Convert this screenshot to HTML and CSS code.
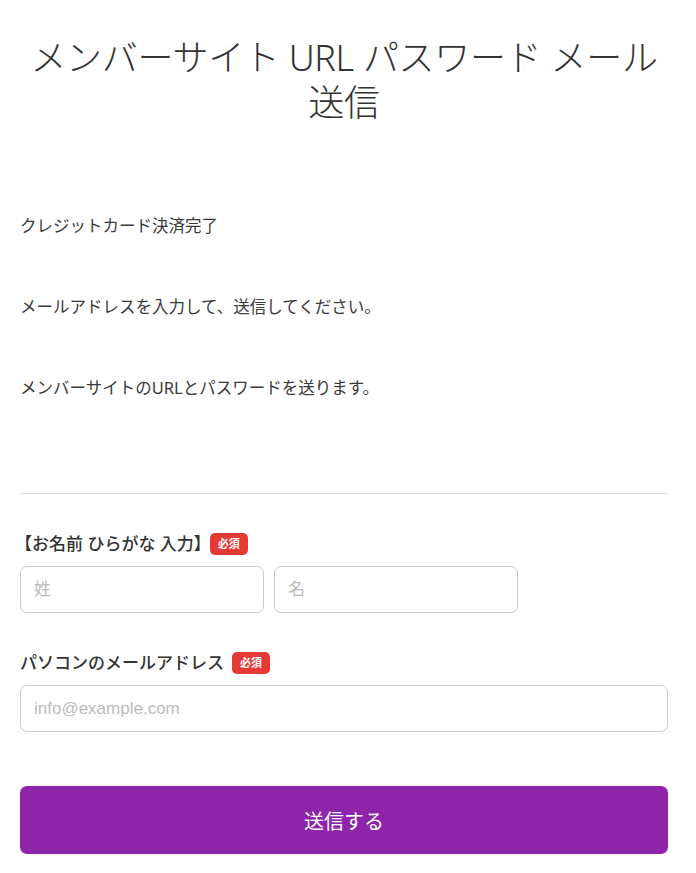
FILE: index.html
```html
<!DOCTYPE html>
<html lang="ja">
<head>
  <meta charset="UTF-8" />
  <title>メンバーサイト URL パスワード メール送信</title>
  <link rel="stylesheet" href="styles.css">
</head>
<body>
  <div class="page">
    <h1 class="title">メンバーサイト URL パスワード メール送信</h1>

    <div class="intro">
      <p>クレジットカード決済完了</p>
      <p>メールアドレスを入力して、送信してください。</p>
      <p>メンバーサイトのURLとパスワードを送ります。</p>
    </div>

    <hr class="divider">

    <form class="form" onsubmit="return false;">
      <div class="field">
        <div class="label label-bracket">【お名前 ひらがな 入力】<span class="req">必須</span></div>
        <div class="name-row">
          <input type="text" class="input" placeholder="姓">
          <input type="text" class="input" placeholder="名">
        </div>
      </div>

      <div class="field">
        <div class="label">パソコンのメールアドレス<span class="req">必須</span></div>
        <input type="email" class="input input-wide" placeholder="info@example.com">
      </div>

      <button type="submit" class="submit">送信する</button>
    </form>
  </div>
</body>
</html>
```

FILE: styles.css
```css
body {
  margin: 0;
  background: #fff;
  color: #333;
  font-family: "Noto Sans", "Noto Sans CJK JP", sans-serif;
}
.page {
  padding: 35px 28px 20px 20px;
}
.title {
  margin: 0;
  font-size: 36px;
  font-weight: 300;
  line-height: 45px;
  letter-spacing: -0.3px;
  text-align: center;
  color: #333;
}
.intro {
  margin-top: 87px;
  display: flex;
  flex-direction: column;
  gap: 54px;
}
.intro p {
  margin: 0;
  font-size: 16.5px;
  line-height: 27px;
  color: #3a3a3a;
}
.divider {
  border: 0;
  border-top: 1px solid #ddd;
  margin: 92px 0 0;
}
.form {
  margin-top: 38px;
}
.field {
  margin-bottom: 38px;
}
.label {
  display: flex;
  align-items: center;
  font-size: 17px;
  font-weight: 500;
  line-height: 24px;
  margin-bottom: 10px;
  color: #333;
}
.label-bracket {
  margin-left: -5px;
}
.req {
  display: inline-block;
  background: #e53935;
  color: #fff;
  font-size: 11px;
  font-weight: 700;
  line-height: 22px;
  padding: 0 8px;
  border-radius: 5px;
  margin-left: 8px;
}
.label-bracket .req {
  margin-left: -1px;
}
.name-row {
  display: flex;
  gap: 10px;
}
.input {
  box-sizing: border-box;
  width: 244px;
  height: 47px;
  border: 1px solid #ccc;
  border-radius: 7px;
  padding: 0 13px;
  font-size: 17px;
  font-family: "Liberation Sans", "Noto Sans CJK JP", sans-serif;
  color: #333;
  background: #fff;
}
.input::placeholder {
  color: #bbb;
}
.input-wide {
  width: 100%;
}
.submit {
  display: block;
  width: 100%;
  height: 68px;
  margin-top: 54px;
  border: 0;
  border-radius: 7px;
  background: #8e24aa;
  color: #fff;
  font-size: 20px;
  font-family: "Noto Sans", "Noto Sans CJK JP", sans-serif;
}
```
